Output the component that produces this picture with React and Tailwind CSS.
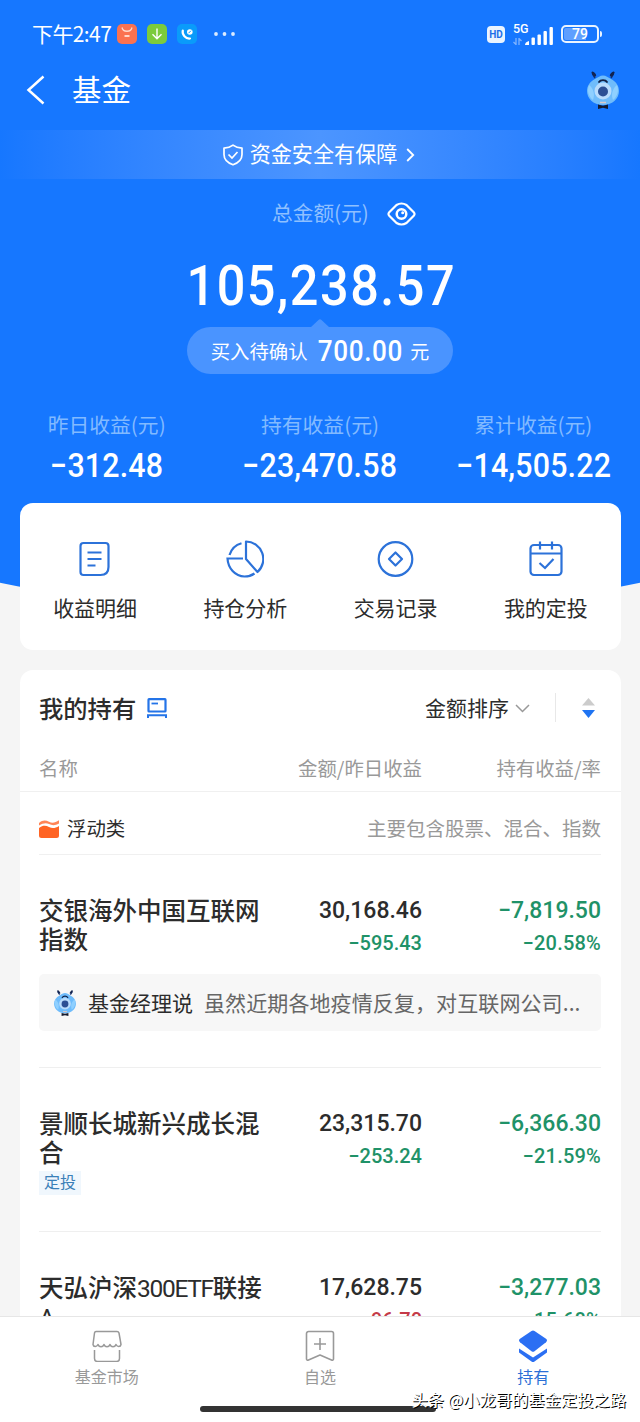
import React from "react";

const summary = [
  { label: "昨日收益(元)", value: "−312.48" },
  { label: "持有收益(元)", value: "−23,470.58" },
  { label: "累计收益(元)", value: "−14,505.22" },
];

const funds = [
  {
    name: "交银海外中国互联网指数",
    amount: "30,168.46",
    daily: "−595.43",
    total: "−7,819.50",
    rate: "−20.58%",
    height: "h-[213px]",
    comment: "虽然近期各地疫情反复，对互联网公司...",
  },
  {
    name: "景顺长城新兴成长混合",
    amount: "23,315.70",
    daily: "−253.24",
    total: "−6,366.30",
    rate: "−21.59%",
    height: "h-[164px]",
    tag: "定投",
  },
  {
    name: (
      <>
        天弘沪深
        <span className="font-normal tracking-[-1.300px]">300ETF</span>
        联接<span className="font-normal">A</span>
      </>
    ),
    amount: "17,628.75",
    daily: "96.70",
    dailyUp: true,
    total: "−3,277.03",
    rate: "−15.68%",
    height: "h-[164px]",
  },
];

const Mascot = ({ className }) => (
  <svg className={className} viewBox="0 0 34 38" fill="none">
    <path d="M9 7 6.500 2.800M25 7l2.500-4.200" stroke="#14306e" strokeWidth="1.500" />
    <ellipse cx="7.800" cy="3" rx="1.500" ry="3" transform="rotate(-40 7.800 3)" fill="#122350" />
    <ellipse cx="26.200" cy="3" rx="1.500" ry="3" transform="rotate(40 26.200 3)" fill="#122350" />
    <path
      d="M17 4.500c3 0 5 2 8 3.500 5 2.500 8 7 8 12 0 7-6 14-16 14S1 27 1 20c0-5 3-9.500 8-12 3-1.500 5-3.500 8-3.500z"
      fill="#6fbcfb"
    />
    <path d="M3 14c-2 5-1 11 4 15 2-5 1-11-4-15zM31 14c2 5 1 11-4 15-2-5-1-11 4-15z" fill="#8fd0ff" />
    <circle cx="17" cy="20" r="8.500" fill="#b9dcfc" />
    <circle cx="17" cy="20.500" r="5" fill="#2b4f94" />
    <path d="M13 11c1.500-2.600 6.500-2.600 8 0" stroke="#102045" strokeWidth="1.800" strokeLinecap="round" />
    <path d="M14 31.500h6" stroke="#d9c9c9" strokeWidth="1.500" />
    <path d="M12 33.500l5 1.300 5-1.300v4.500l-5-1.200-5 1.200z" fill="#161b2e" />
  </svg>
);

const StatusBar = () => (
  <div className="flex h-[68px] items-center justify-between pl-8 pr-[38px]">
    <div className="flex items-center">
      <span className="mb-px w-[85px] whitespace-nowrap text-[21px] tracking-[-0.600px]">下午2:47</span>
      <svg className="h-5 w-5" viewBox="0 0 20 20" fill="none">
        <rect width="20" height="20" rx="5" fill="#fb7250" />
        <path d="M5 3.500c1 5 9 5 10 0" stroke="#ffd9cd" strokeWidth="1.300" />
        <path d="M7.500 12h5" stroke="#ffe2d8" strokeWidth="1.800" />
      </svg>
      <svg className="ml-[10px] h-5 w-5" viewBox="0 0 20 20" fill="none">
        <rect width="20" height="20" rx="5" fill="#7ccb3c" />
        <path d="M10 4.500v10M5.500 10.200l4.500 4.500 4.500-4.500" stroke="#fff" strokeWidth="1.400" />
      </svg>
      <svg className="ml-[10px] h-5 w-5" viewBox="0 0 20 20" fill="none">
        <rect width="20" height="20" rx="5" fill="#0a9bfa" />
        <path d="M5.800 6.500c-1 4 3 8.500 7.200 8" stroke="#fff" strokeWidth="2.200" strokeLinecap="round" />
        <circle cx="12.800" cy="8" r="2.800" fill="#fff" />
        <path d="M11.500 9.200l2.500-2.500" stroke="#0a9bfa" strokeWidth="1" />
      </svg>
      <svg className="ml-[17px] h-1 w-[22px]" viewBox="0 0 22 4" fill="#dcebff">
        <circle cx="2" cy="2" r="1.900" />
        <circle cx="10.500" cy="2" r="1.900" />
        <circle cx="19" cy="2" r="1.900" />
      </svg>
    </div>
    <div className="flex items-center">
      <span className="flex h-[17px] w-[18px] items-center justify-center rounded-[4px] bg-[#eaf4ff] font-['Roboto'] text-[10px] font-bold leading-[17px] text-[#1c6fe8]">
        HD
      </span>
      <div className="ml-[8px] flex h-[21px] w-[40px] items-end justify-between">
        <div className="flex h-full flex-col justify-between">
          <span className="h-[10px] w-4 font-['Roboto'] text-[12.500px] font-medium leading-[9px] tracking-[-0.200px]">5G</span>
          <svg className="h-[7px] w-[9px]" viewBox="0 0 9 7" fill="none" stroke="#7fb3ff" strokeWidth="1.300">
            <path d="M3 0v6.500L.5 4M6 7V.5L8.500 3" />
          </svg>
        </div>
        <svg className="-ml-1 h-[18px] w-[28px] shrink-0" viewBox="0 0 28 18" fill="#fff">
          <path d="M0 18q0-3 4-4v4z" />
          <rect x="6.500" y="10.500" width="3.400" height="7.500" rx="1" />
          <rect x="12.500" y="7.500" width="3.400" height="10.500" rx="1" />
          <rect x="18.500" y="4" width="3.400" height="14" rx="1" />
          <rect x="24.500" y="0" width="3.400" height="18" rx="1" />
        </svg>
      </div>
      <div className="ml-[8px] flex items-center">
        <div className="flex h-[18px] w-[38px] items-center justify-center rounded-[5px] border-2 border-[#eaf4ff] p-px">
          <span className="flex h-full w-full items-center justify-center rounded-[2px] bg-gradient-to-r from-[#5f9fff] from-70% to-[#1677ff] to-70% font-['Roboto'] text-[14px] font-medium leading-none">
            79
          </span>
        </div>
        <span className="ml-px h-[6px] w-[2px] rounded-r bg-[#eaf4ff]" />
      </div>
    </div>
  </div>
);

const Header = () => (
  <header className="h-[615px] shrink-0 bg-[#1677ff] text-white [clip-path:ellipse(1000px_615px_at_50%_0)]">
    <StatusBar />
    <div className="flex h-11 items-center pl-[26px] pr-5">
      <svg className="h-[30px] w-[19px]" viewBox="0 0 19 30" fill="none" stroke="#fff" strokeWidth="2.500">
        <path d="M17.500 1.500 2.500 15l15 13.500" />
      </svg>
      <h1 className="mb-1 ml-[27px] text-[29.500px] leading-[40px]">基金</h1>
      <Mascot className="ml-auto h-[38px] w-[34px]" />
    </div>
    <div className="mt-[18px] flex h-[49px] items-center justify-center bg-gradient-to-r from-[#1677ff] via-[#4c95ff] to-[#1677ff] pr-[3px]">
      <svg className="h-[22px] w-[22px]" viewBox="0 0 22 22" fill="none" stroke="#fff" strokeWidth="1.700">
        <path d="M11 1.200c2.600 2 5.500 2.800 9 3v6.300c0 5-3.500 8.300-9 10.300-5.500-2-9-5.300-9-10.300V4.200c3.500-.2 6.400-1 9-3z" strokeLinejoin="round" />
        <path d="M6.500 10.500l3.500 3.500 5.500-6" />
      </svg>
      <span className="mb-[3px] ml-[6px] text-[21.100px] leading-[46px]">资金安全有保障</span>
      <svg className="ml-[9px] h-[14px] w-[9px]" viewBox="0 0 9 14" fill="none" stroke="#fff" strokeWidth="1.800">
        <path d="M1.200 1l6 6-6 6" />
      </svg>
    </div>
    <div className="mt-[20px] flex h-[30px] items-center pl-[272px]">
      <span className="mb-[2px] w-[115px] text-[20.700px] text-[#8fc0ff]">总金额(元)</span>
      <svg className="h-[24px] w-[29px]" viewBox="0 0 29 24" fill="none" stroke="#fff" strokeWidth="2.200">
        <path d="M2 10.500 9.500 3q5-3 10 0L27 10.500q1 1.500 0 3L19.500 21q-5 3-10 0L2 13.500q-1-1.500 0-3z" strokeLinejoin="round" />
        <circle cx="14.500" cy="12" r="4.800" strokeWidth="2.500" />
        <circle cx="15.700" cy="10.800" r="1.500" fill="#fff" stroke="none" />
      </svg>
    </div>
    <p className="mt-[22px] h-[70px] scale-x-90 pl-[3px] text-center font-['Roboto'] text-[56px] font-medium leading-[71px] tracking-[1.700px]">
      105,238.57
    </p>
    <div className="flex flex-col items-center">
      <svg className="-mt-[2px] h-2 w-[18px]" viewBox="0 0 18 8" fill="#4a94ff">
        <path d="M0 8 7.500 1Q9-.5 10.500 1L18 8z" />
      </svg>
      <div className="flex h-[47px] w-[266px] items-center justify-center rounded-full bg-[#4a94ff]">
        <span className="mt-px text-[19.400px]">买入待确认</span>
        <span className="ml-[5px] mt-[3px] scale-x-90 font-['Roboto'] text-[29px] font-medium tracking-[0.700px]">700.00</span>
        <span className="ml-[3px] mt-px text-[19px]">元</span>
      </div>
    </div>
    <div className="mt-[35px] grid grid-cols-3 text-center">
      {summary.map((item) => (
        <div key={item.label}>
          <p className="text-[20.800px] leading-[31px] text-[#82baff]">{item.label}</p>
          <p className="mt-[4px] scale-x-92 font-['Roboto'] text-[33px] font-medium leading-[43px] tracking-[0.200px]">
            {item.value}
          </p>
        </div>
      ))}
    </div>
  </header>
);

const actions = [
  {
    label: "收益明细",
    icon: (
      <>
        <path d="M7 3h22a3 3 0 0 1 3 3v21c0 5-3 8-8 8H7a3 3 0 0 1-3-3V6a3 3 0 0 1 3-3z" transform="translate(.5 0)" />
        <path d="M11.500 12.500h14M11.500 19h14M11.500 25.500h8" />
      </>
    ),
  },
  {
    label: "持仓分析",
    icon: (
      <>
        <path d="M20 1.500A17.500 17.500 0 0 1 31.500 32L20 19z" strokeLinejoin="round" />
        <path d="M15.500 3.300A17.500 17.500 0 0 0 3.500 15M17 18.500H1.500c.5 9.500 7.500 18 17 18 4 0 7.500-1.300 10-3" />
      </>
    ),
  },
  {
    label: "交易记录",
    icon: (
      <>
        <circle cx="18.500" cy="19" r="16.800" />
        <path d="M18.500 12.500 25 19l-6.500 6.500L12 19z" strokeLinejoin="round" />
      </>
    ),
  },
  {
    label: "我的定投",
    icon: (
      <>
        <rect x="3.500" y="5" width="31" height="30" rx="3.500" />
        <path d="M3.500 13.500h31M13 1.500v8M25 1.500v8M12.500 23l5.500 5 8.500-9" />
      </>
    ),
  },
];

const QuickActions = () => (
  <section className="relative -mt-[112px] ml-5 mr-[19px] grid h-[147px] shrink-0 grid-cols-4 rounded-[13px] bg-white pt-[37px]">
    {actions.map(({ label, icon }) => (
      <div key={label} className="flex flex-col items-center">
        <svg className="h-[38px] w-[38px]" viewBox="0 0 38 38" fill="none" stroke="#2c72d9" strokeWidth="2.200">
          {icon}
        </svg>
        <span className="mt-[13px] text-[21px] leading-[32px] text-[#2c2c2c]">{label}</span>
      </div>
    ))}
  </section>
);

const FundRow = ({ fund, last }) => (
  <div className={`ml-[19px] mr-5 pt-[39px] ${fund.height} ${last ? "" : "border-b border-[#efefef]"}`}>
    <div className="flex">
      <div className="w-[228px] pt-[3px]">
        <h3 className="font-['Roboto','Noto_Sans_CJK_SC',sans-serif] text-[24.500px] font-medium leading-[29px]">
          {fund.name}
        </h3>
        {fund.tag && (
          <span className="mt-[3px] block h-[24px] w-[42px] bg-[#f0f7fd] text-center text-[16px] leading-[21px] text-[#3a80b8]">
            {fund.tag}
          </span>
        )}
      </div>
      <div className="w-[155px] pt-[2px] text-right font-['Roboto'] font-medium">
        <p className="text-[23px] leading-[30px]">{fund.amount}</p>
        <p className={`mt-[3px] text-[20px] leading-[28px] ${fund.dailyUp ? "text-[#c43a48]" : "text-[#1f9268]"}`}>
          {fund.daily}
        </p>
      </div>
      <div className="flex-1 pt-[2px] text-right font-['Roboto'] font-medium text-[#1f9268]">
        <p className="text-[23px] leading-[30px]">{fund.total}</p>
        <p className="mt-[3px] text-[20px] leading-[28px] tracking-[0.200px]">{fund.rate}</p>
      </div>
    </div>
    {fund.comment && (
      <div className="mt-[17px] flex h-[57px] items-center rounded-[5px] bg-[#f7f7f7] pl-[14px]">
        <Mascot className="h-[26px] w-[24px]" />
        <span className="ml-[11px] text-[21px]">基金经理说</span>
        <span className="ml-[11px] whitespace-nowrap text-[21px] tracking-[0.100px] text-[#666]">{fund.comment}</span>
      </div>
    )}
  </div>
);

const Holdings = () => (
  <section className="ml-5 mr-[19px] mt-5 shrink-0 rounded-t-[13px] bg-white text-[#2c2c2c]">
    <div className="flex h-[76px] items-center pl-[19px] pr-[26px]">
      <h2 className="w-[96px] whitespace-nowrap text-[24.300px] font-medium">我的持有</h2>
      <svg className="ml-[12px] h-[20px] w-[20px]" viewBox="0 0 20 20" fill="none" stroke="#2474e8" strokeWidth="2.200">
        <rect x="1.500" y="1.200" width="17" height="12.300" rx=".5" />
        <path d="M4.500 5.500h6.500" strokeWidth="1.800" />
        <path d="M1 20v-2.700h18V20" strokeWidth="2" />
      </svg>
      <span className="ml-auto text-[21px]">金额排序</span>
      <svg className="ml-[6px] h-[9px] w-[15px]" viewBox="0 0 15 9" fill="none" stroke="#999" strokeWidth="1.500">
        <path d="M1 1l6.500 6.500L14 1" />
      </svg>
      <span className="ml-[25px] mt-[-2px] h-[29px] w-px bg-[#e8e8e8]" />
      <svg className="ml-[26px] h-[20px] w-[13px]" viewBox="0 0 13 20">
        <path d="M6.500 0 13 7.500H0z" fill="#ccc" />
        <path d="M6.500 20 13 12H0z" fill="#1f74f2" />
      </svg>
    </div>
    <div className="flex h-[46px] items-center border-b border-[#f0f0f0] pb-[2px] pl-[19px] pr-5 text-[19.400px] text-[#999]">
      <span className="w-[228px]">名称</span>
      <span className="w-[155px] text-right">金额/昨日收益</span>
      <span className="flex-1 text-right">持有收益/率</span>
    </div>
    <div className="ml-[19px] mr-5 flex h-[63px] items-center border-b border-[#f0f0f0] pt-[10px]">
      <svg className="mt-[2px] h-[18px] w-[20px]" viewBox="0 0 20 18">
        <path d="M0 3C4-.5 7 .3 10 1.800S16 3 20 .3V3.500c-4 2.300-7 2-10 .5S4 3 0 5.500z" fill="#ff8557" />
        <path d="M0 8c4-3 7-2.500 10-1s6 1.500 10-1v9.500a2.500 2.500 0 0 1-2.500 2.500h-15A2.500 2.500 0 0 1 0 15.500z" fill="#ff6424" />
      </svg>
      <span className="ml-2 text-[19.400px]">浮动类</span>
      <span className="ml-auto text-[19.500px] text-[#999]">主要包含股票、混合、指数</span>
    </div>
    {funds.map((fund, i) => (
      <FundRow key={fund.amount} fund={fund} last={i === funds.length - 1} />
    ))}
  </section>
);

const tabs = [
  {
    label: "基金市场",
    icon: (
      <g fill="none" stroke="#999" strokeWidth="1.500">
        <path d="M5 1.500h21q1.500 0 2 1.500l2 11.500c-.5 2.500-3.500 3-5 0-1 3-5 3-6 0-1 3-5 3-6 0-1 3-5 3-6 0-1.500 3-4.500 2.500-5 0L3.500 3q.3-1.500 1.500-1.500z" strokeLinejoin="round" />
        <path d="M3.500 20v8.500a3 3 0 0 0 3 3h19a3 3 0 0 0 3-3V20" />
      </g>
    ),
  },
  {
    label: "自选",
    icon: (
      <g fill="none" stroke="#999" strokeWidth="1.600" strokeLinejoin="round">
        <path d="M4.500 1.500h23a2 2 0 0 1 2 2V29c0 1-1 1.500-2 1L16 25 4.500 30c-1 .5-2 0-2-1V3.500a2 2 0 0 1 2-2z" />
        <path d="M16 8v12M10 14h12" />
      </g>
    ),
  },
  {
    label: "持有",
    active: true,
    icon: (
      <g fill="#2b6ff3">
        <path d="M14.500 1q1.500-1 3 0L29 8.800q2 1.700 0 3.400l-11.500 9q-1.500 1-3 0L3 12.200q-2-1.700 0-3.400z" />
        <path d="M2 18.500l14 9 14-9v4L17.500 31.500q-1.500 1-3 0L2 22.500z" />
      </g>
    ),
  },
];

const TabBar = () => (
  <nav className="relative h-[106px] shrink-0 border-t border-[#e6e6e6] bg-white">
    <div className="grid grid-cols-3 pt-[13px]">
      {tabs.map(({ label, icon, active }) => (
        <div key={label} className="flex flex-col items-center">
          <svg className="h-8 w-8" viewBox="0 0 32 32">
            {icon}
          </svg>
          <span className={`mt-[3px] text-[16px] leading-[23px] ${active ? "text-[#2b6fd6]" : "text-[#999]"}`}>
            {label}
          </span>
        </div>
      ))}
    </div>
    <span className="absolute bottom-[10px] left-[200px] h-[6px] w-[236px] rounded-full bg-[#333]" />
    <span className="absolute bottom-[12px] right-[14px] whitespace-nowrap text-[16.300px] leading-[22px] text-white [text-shadow:1px_1px_0_#000]">
      头条 @小龙哥的基金定投之路
    </span>
  </nav>
);

export default function App() {
  return (
    <div className="flex h-[1422px] w-[640px] flex-col overflow-hidden bg-[#f5f5f5] font-['Noto_Sans_CJK_SC',sans-serif]">
      <main className="flex min-h-0 flex-1 flex-col overflow-hidden">
        <Header />
        <QuickActions />
        <Holdings />
      </main>
      <TabBar />
    </div>
  );
}
